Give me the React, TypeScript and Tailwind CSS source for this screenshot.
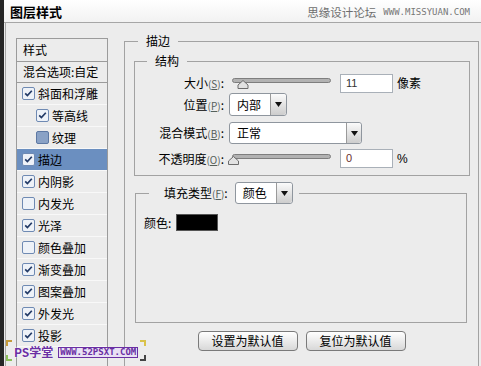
import React from "react";

type CS = "on" | "off" | "fill";

function Check({ state }: { state: CS }) {
  return (
    <svg width="13" height="13" viewBox="0 0 13 13" className="shrink-0">
      {state === "fill" ? (
        <rect x="0.5" y="0.5" width="12" height="12" rx="1.5" fill="#8aa2c6" stroke="#5d78a3" />
      ) : (
        <rect x="0.5" y="0.5" width="12" height="12" rx="1.5" fill="#eef2f8" stroke="#6f8ab3" />
      )}
      {state === "on" && (
        <path d="M3.2 6.4 L5.4 8.6 L9.8 3.8" fill="none" stroke="#223a66" strokeWidth="1.7" />
      )}
    </svg>
  );
}

function Slider({ pos }: { pos: number }) {
  return (
    <svg width="105" height="14" viewBox="0 0 105 14" className="ml-[4px] shrink-0">
      <rect x="4.5" y="2.5" width="98" height="4" rx="2" fill="#b2b2b2" stroke="#7e7e7e" />
      <path
        d={`M${pos - 5} 12.5 V9 L${pos} 4.5 L${pos + 5} 9 V12.5 Z`}
        fill="#e2e2e2"
        stroke="#6c6c6c"
      />
    </svg>
  );
}

function Arrow({ w }: { w: number }) {
  return (
    <div
      className={`flex h-full items-center justify-center rounded-r-[3px] border-l border-[#9a9a9a] bg-linear-to-b from-[#fbfbfb] to-[#cdcdcd] ${
        w === 16 ? "w-[16px]" : "w-[15px]"
      }`}
    >
      <svg width="7" height="5" viewBox="0 0 7 5">
        <path d="M0 0H7L3.5 5Z" fill="#111" />
      </svg>
    </div>
  );
}

function Key({ k }: { k: string }) {
  return (
    <span className="text-[10px] text-[#55605a]">
      (<span className="underline">{k}</span>)
    </span>
  );
}

const items: { t: string; s: CS; indent?: boolean; sel?: boolean }[] = [
  { t: "斜面和浮雕", s: "on" },
  { t: "等高线", s: "on", indent: true },
  { t: "纹理", s: "fill", indent: true },
  { t: "描边", s: "on", sel: true },
  { t: "内阴影", s: "on" },
  { t: "内发光", s: "off" },
  { t: "光泽", s: "on" },
  { t: "颜色叠加", s: "off" },
  { t: "渐变叠加", s: "on" },
  { t: "图案叠加", s: "on" },
  { t: "外发光", s: "on" },
  { t: "投影", s: "on" },
];

export default function App() {
  return (
    <div className="relative flex h-[366px] w-[481px] overflow-hidden bg-[#ececec] font-['Noto_Sans_CJK_SC','Noto_Sans',sans-serif] text-[12px] text-black">
      <div className="w-[4px] shrink-0 bg-[#262626]" />
      <div className="flex min-w-0 flex-1 flex-col">
        {/* title bar */}
        <div className="flex h-[23px] shrink-0 items-center border-b border-[#a6a6a6] bg-linear-to-b from-[#ffffff] to-[#f2f2f2] pl-[6px] pr-[11px]">
          <span className="text-[13px] font-bold leading-none">图层样式</span>
          <span className="ml-auto pt-[3px] text-[11.5px] leading-none text-[#6e6e6e]">思缘设计论坛</span>
          <span className="ml-[7px] pt-[3px] font-['DejaVu_Sans_Mono',monospace] text-[9px] leading-none text-[#777]">
            WWW.MISSYUAN.COM
          </span>
        </div>

        {/* body */}
        <div className="ml-[1px] flex flex-1 items-start border-l border-[#a6a6a6] pl-[10px]">
          {/* style list */}
          <div className="mt-[15px] h-[340px] w-[92px] shrink-0 border border-[#9b9b9b]">
            <div className="flex h-[23px] items-center border-b border-[#9b9b9b] px-[6px] leading-none">样式</div>
            <div className="flex h-[21px] items-center border-b border-[#9b9b9b] px-[6px] leading-none">
              混合选项:自定
            </div>
            {items.map((it) => (
              <div
                key={it.t}
                className={`flex h-[22px] items-center gap-[3px] border-b border-[#f8f8f8] leading-none ${
                  it.indent ? "pl-[19px]" : "pl-[5px]"
                } ${it.sel ? "bg-[#6b8fc0]" : ""}`}
              >
                <Check state={it.s} />
                <span>{it.t}</span>
              </div>
            ))}
          </div>

          {/* 描边 group */}
          <fieldset className="ml-[16px] mt-[10px] h-[340px] w-[355px] shrink-0 border border-[#a2a2a2]">
            <legend className="ml-[13px] px-[8px] text-[12px] leading-[16px]">描边</legend>

            {/* 结构 */}
            <fieldset className="ml-[9px] mt-[4px] w-[336px] border border-[#a2a2a2] pb-[7px]">
              <legend className="ml-[12px] px-[8px] text-[12px] leading-[16px]">结构</legend>

              <div className="mt-[4px] flex h-[20px] items-center">
                <div className="w-[89px] text-right leading-none">
                  大小<Key k="S" />:
                </div>
                <Slider pos={15} />
                <div className="ml-[7px] flex h-[19px] w-[53px] items-center border border-[#a9b0b8] bg-white pl-[5px] font-['Liberation_Sans',sans-serif] text-[11px] text-[#333]">
                  11
                </div>
                <span className="ml-[4px] leading-none">像素</span>
              </div>

              <div className="flex h-[23px] items-center">
                <div className="w-[89px] text-right leading-none">
                  位置<Key k="P" />:
                </div>
                <div className="ml-[5px] flex h-[23px] w-[58px] items-center rounded-[3px] border border-[#8f969e] bg-white">
                  <span className="flex-1 pl-[7px] leading-none">内部</span>
                  <Arrow w={16} />
                </div>
              </div>

              <div className="mt-[6px] flex h-[22px] items-center">
                <div className="w-[89px] text-right leading-none">
                  混合模式<Key k="B" />:
                </div>
                <div className="ml-[5px] flex h-[22px] w-[133px] items-center rounded-[3px] border border-[#8f969e] bg-white">
                  <span className="flex-1 pl-[7px] leading-none">正常</span>
                  <Arrow w={15} />
                </div>
              </div>

              <div className="mt-[5px] flex h-[19px] items-center">
                <div className="w-[89px] text-right leading-none">
                  不透明度<Key k="O" />:
                </div>
                <Slider pos={5.5} />
                <div className="ml-[7px] flex h-[19px] w-[53px] items-center border border-[#a9b0b8] bg-white pl-[5px] font-['Liberation_Sans',sans-serif] text-[11px] text-[#6a2f2f]">
                  0
                </div>
                <span className="ml-[4px] font-['Liberation_Sans',sans-serif] text-[12px] leading-none">%</span>
              </div>
            </fieldset>

            {/* 填充类型 */}
            <fieldset className="ml-[10px] mt-[6px] h-[141px] w-[332px] border border-[#a2a2a2]">
              <legend className="ml-[13px] pl-[15px] pr-[6px]">
                <div className="flex h-[22px] items-center">
                  <span className="leading-none">
                    填充类型<Key k="F" />:
                  </span>
                  <div className="ml-[7px] flex h-[22px] w-[58px] items-center rounded-[3px] border border-[#8f969e] bg-white">
                    <span className="flex-1 pl-[7px] leading-none">颜色</span>
                    <Arrow w={16} />
                  </div>
                </div>
              </legend>
              <div className="mt-[10px] flex items-center pl-[8px]">
                <span className="leading-none">颜色:</span>
                <div className="ml-[5px] h-[17px] w-[42px] border border-[#555] bg-black" />
              </div>
            </fieldset>

            <div className="mt-[8px] flex justify-center gap-[8px]">
              <div className="flex h-[20px] w-[100px] items-center justify-center rounded-[4px] border border-[#7a7a7a] bg-linear-to-b from-[#ffffff] to-[#d8d8d8] leading-none">
                设置为默认值
              </div>
              <div className="flex h-[20px] w-[100px] items-center justify-center rounded-[4px] border border-[#7a7a7a] bg-linear-to-b from-[#ffffff] to-[#d8d8d8] leading-none">
                复位为默认值
              </div>
            </div>
          </fieldset>
        </div>
      </div>

      {/* watermark overlay */}
      <div className="absolute left-[6px] top-[340px] h-[21px] w-[140px]">
        <div className="absolute left-0 top-0 h-[6px] w-[6px] border-l-[2px] border-t-[2px] border-[#c49a3a]" />
        <div className="absolute right-0 top-0 h-[6px] w-[6px] border-r-[2px] border-t-[2px] border-[#d9c24a]" />
        <div className="absolute bottom-0 left-0 h-[6px] w-[6px] border-b-[2px] border-l-[2px] border-[#8cc05a]" />
        <div className="absolute bottom-0 right-0 h-[6px] w-[6px] border-b-[2px] border-r-[2px] border-[#444]" />
        <div className="flex h-full items-center pl-[8px] pt-[3px]">
          <span className="text-[12px] font-bold leading-none text-[#6a2fa3] [text-shadow:0_0_1px_#fff,0_0_1px_#fff,0_0_2px_#fff]">
            PS学堂
          </span>
          <span className="ml-[5px] border border-[#6a2fa3] bg-[#e9e1f4] px-[1px] font-['DejaVu_Sans_Mono',monospace] text-[9px] font-bold leading-[9px] text-[#6a2fa3]">
            WWW.52PSXT.COM
          </span>
        </div>
      </div>
    </div>
  );
}
